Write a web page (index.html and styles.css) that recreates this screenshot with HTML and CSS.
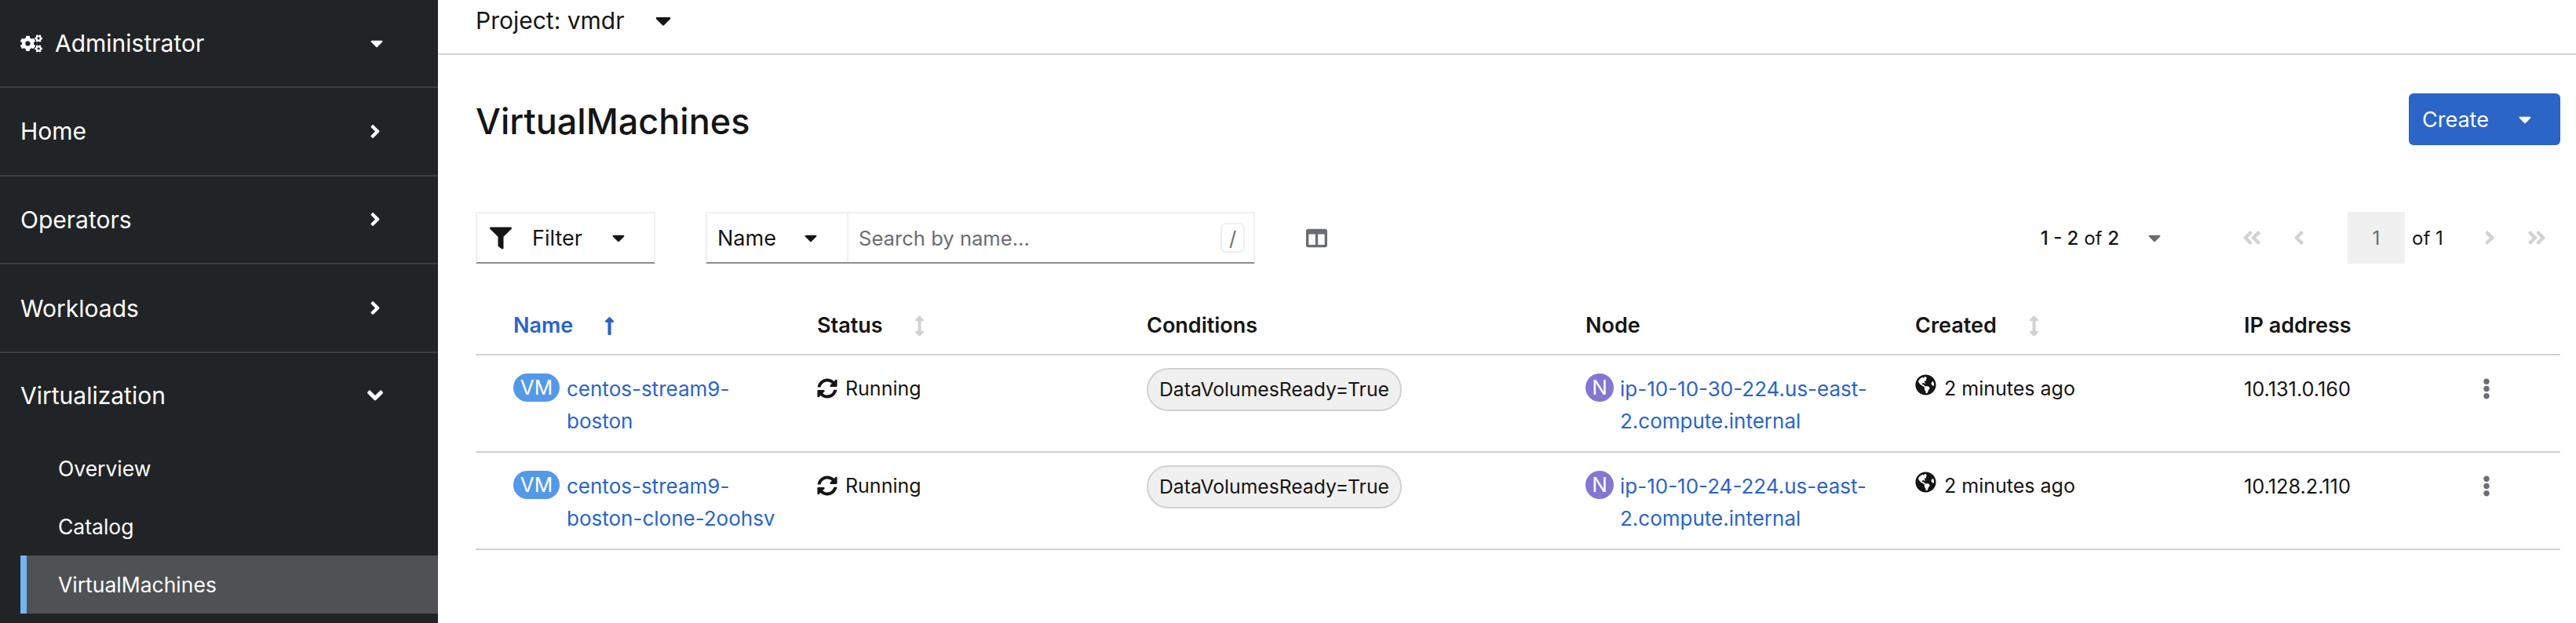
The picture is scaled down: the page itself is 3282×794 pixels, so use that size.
FILE: index.html
```html
<!DOCTYPE html>
<html lang="en">
<head>
  <meta charset="UTF-8">
  <title>VirtualMachines</title>
  <link rel="stylesheet" href="styles.css">
</head>
<body>

  <svg class="icon-defs" xmlns="http://www.w3.org/2000/svg">
    <symbol id="i-caret" viewBox="0 0 320 512"><path d="M31.3 192h257.3c17.8 0 26.7 21.5 14.1 34.1L174.1 354.8c-7.8 7.8-20.5 7.8-28.3 0L17.2 226.1C4.6 213.5 13.5 192 31.3 192z"/></symbol>
    <symbol id="i-right" viewBox="0 0 256 512"><path d="M224.3 273l-136 136c-9.4 9.4-24.6 9.4-33.9 0l-22.6-22.6c-9.4-9.4-9.4-24.6 0-33.9l96.4-96.4-96.4-96.4c-9.4-9.4-9.4-24.6 0-33.9L54.3 103c9.4-9.4 24.6-9.4 33.9 0l136 136c9.5 9.4 9.5 24.6.1 34z"/></symbol>
    <symbol id="i-left" viewBox="0 0 256 512"><path d="M31.7 239l136-136c9.4-9.4 24.6-9.4 33.9 0l22.6 22.6c9.4 9.4 9.4 24.6 0 33.9L127.9 256l96.4 96.4c9.4 9.4 9.4 24.6 0 33.9L201.7 409c-9.4 9.4-24.6 9.4-33.9 0l-136-136c-9.5-9.4-9.5-24.6-.1-34z"/></symbol>
    <symbol id="i-down" viewBox="0 0 320 512"><path d="M143 352.3L7 216.3c-9.4-9.4-9.4-24.6 0-33.9l22.6-22.6c9.4-9.4 24.6-9.4 33.9 0l96.4 96.4 96.4-96.4c9.4-9.4 24.6-9.4 33.9 0l22.6 22.6c9.4 9.4 9.4 24.6 0 33.9l-136 136c-9.2 9.4-24.4 9.4-33.8 0z"/></symbol>
    <symbol id="i-dleft" viewBox="0 0 448 512"><path d="M223.7 239l136-136c9.4-9.4 24.6-9.4 33.9 0l22.6 22.6c9.4 9.4 9.4 24.6 0 33.9L319.9 256l96.4 96.4c9.4 9.4 9.4 24.6 0 33.9L393.7 409c-9.4 9.4-24.6 9.4-33.9 0l-136-136c-9.5-9.4-9.5-24.6-.1-34zm-192 34l136 136c9.4 9.4 24.6 9.4 33.9 0l22.6-22.6c9.4-9.4 9.4-24.6 0-33.9L127.9 256l96.4-96.4c9.4-9.4 9.4-24.6 0-33.9L201.7 103c-9.4-9.4-24.6-9.4-33.9 0l-136 136c-9.5 9.4-9.5 24.6-.1 34z"/></symbol>
    <symbol id="i-dright" viewBox="0 0 448 512"><path d="M224.3 273l-136 136c-9.4 9.4-24.6 9.4-33.9 0l-22.6-22.6c-9.4-9.4-9.4-24.6 0-33.9l96.4-96.4-96.4-96.4c-9.4-9.4-9.4-24.6 0-33.9L54.3 103c9.4-9.4 24.6-9.4 33.9 0l136 136c9.5 9.4 9.5 24.6.1 34zm192-34l-136-136c-9.4-9.4-24.6-9.4-33.9 0l-22.6 22.6c-9.4 9.4-9.4 24.6 0 33.9l96.4 96.4-96.4 96.4c-9.4 9.4-9.4 24.6 0 33.9l22.6 22.6c9.4 9.4 24.6 9.4 33.9 0l136-136c9.4-9.2 9.4-24.4 0-33.8z"/></symbol>
    <symbol id="i-filter" viewBox="0 0 512 512"><path d="M487.976 0H24.028C2.71 0-8.047 25.866 7.058 40.971L192 225.941V432c0 7.831 3.821 15.17 10.237 19.662l80 55.98C298.02 518.69 320 507.493 320 487.98V225.941l184.947-184.97C520.021 25.896 509.338 0 487.976 0z"/></symbol>
    <symbol id="i-columns" viewBox="0 0 512 512"><path d="M464 32H48C21.49 32 0 53.49 0 80v352c0 26.51 21.49 48 48 48h416c26.51 0 48-21.49 48-48V80c0-26.51-21.49-48-48-48zM224 416H64V160h160v256zm224 0H288V160h160v256z"/></symbol>
    <symbol id="i-sync" viewBox="0 0 512 512"><path d="M370.72 133.28C339.458 104.008 298.888 87.962 255.848 88c-77.458.068-144.328 53.178-162.791 126.85-1.344 5.363-6.122 9.15-11.651 9.15H24.103c-7.498 0-13.194-6.807-11.807-14.176C33.933 94.924 134.813 8 256 8c66.448 0 126.791 26.136 171.315 68.685L463.03 40.97C478.149 25.851 504 36.559 504 57.941V192c0 13.255-10.745 24-24 24H345.941c-21.382 0-32.09-25.851-16.971-40.971l41.75-41.749zM32 296h134.059c21.382 0 32.09 25.851 16.971 40.971l-41.75 41.75c31.262 29.273 71.835 45.319 114.876 45.28 77.418-.07 144.315-53.144 162.787-126.849 1.344-5.363 6.122-9.15 11.651-9.15h57.304c7.498 0 13.194 6.807 11.807 14.176C478.067 417.076 377.187 504 256 504c-66.448 0-126.791-26.136-171.315-68.685L48.97 471.03C33.851 486.149 8 475.441 8 454.059V320c0-13.255 10.745-24 24-24z"/></symbol>
    <symbol id="i-globe" viewBox="0 0 496 512"><path d="M248 8C111.03 8 0 119.03 0 256s111.03 248 248 248 248-111.03 248-248S384.97 8 248 8zm82.29 357.6c-3.9 3.88-7.99 7.95-11.31 11.28-2.99 3-5.1 6.7-6.17 10.71-1.51 5.66-2.73 11.38-4.77 16.87l-17.39 46.85c-13.76 3-28 4.69-42.65 4.69v-27.38c1.69-12.62-7.64-36.26-22.63-51.25-6-6-9.37-14.14-9.37-22.63v-32.01c0-11.64-6.27-22.34-16.46-27.97-14.37-7.95-34.81-19.06-48.81-26.11-11.48-5.78-22.1-13.14-31.65-21.75l-.8-.72a114.792 114.792 0 0 1-18.06-20.74c-9.38-13.77-24.66-36.42-34.59-51.14 20.47-45.5 57.36-82.04 103.2-101.89l24.01 12.01C203.48 89.74 216 82.01 216 70.11v-11.3c7.99-1.29 16.12-2.11 24.39-2.42l28.3 28.3c6.25 6.25 6.25 16.38 0 22.63L264 112l-10.34 10.34c-3.12 3.12-3.12 8.19 0 11.31l4.69 4.69c3.12 3.12 3.12 8.19 0 11.31l-8 8a8.008 8.008 0 0 1-5.66 2.34h-8.99c-2.08 0-4.08.81-5.58 2.27l-9.92 9.65a8.008 8.008 0 0 0-1.58 9.31l15.59 31.19c2.66 5.32-1.21 11.58-7.15 11.58h-5.64c-1.93 0-3.79-.7-5.24-1.96l-9.28-8.06a16.017 16.017 0 0 0-15.55-3.1l-31.17 10.39a11.95 11.95 0 0 0-8.17 11.34c0 4.53 2.56 8.66 6.61 10.69l11.08 5.54c9.41 4.71 19.79 7.16 30.31 7.16s22.59 27.29 32 32h66.75c8.49 0 16.62 3.37 22.63 9.37l13.69 13.69a30.503 30.503 0 0 1 8.93 21.57 46.536 46.536 0 0 1-13.72 32.98zM417 274.25c-5.79-1.45-10.84-5-14.15-9.97l-17.98-26.97a23.97 23.97 0 0 1 0-26.62l19.59-29.38c2.32-3.47 5.5-6.29 9.24-8.15l12.98-6.49C440.2 193.59 448 223.87 448 256c0 8.67-.74 17.16-1.82 25.54L417 274.25z"/></symbol>
    <symbol id="i-cogs" viewBox="0 0 640 512"><path d="M512.1 191l-8.2 14.3c-3 5.3-9.4 7.5-15.1 5.4-11.8-4.4-22.6-10.7-32.1-18.6-4.6-3.8-5.8-10.5-2.8-15.7l8.2-14.3c-6.9-8-12.3-17.3-15.9-27.4h-16.5c-6 0-11.2-4.3-12.2-10.3-2-12-2.1-24.6 0-37.1 1-6 6.2-10.4 12.2-10.4h16.5c3.6-10.1 9-19.4 15.9-27.4l-8.2-14.3c-3-5.2-1.9-11.9 2.8-15.7 9.5-7.9 20.4-14.2 32.1-18.6 5.7-2.1 12.1.1 15.1 5.4l8.2 14.3c10.5-1.9 21.2-1.9 31.7 0L552 6.3c3-5.3 9.4-7.5 15.1-5.4 11.8 4.4 22.6 10.7 32.1 18.6 4.6 3.8 5.8 10.5 2.8 15.7l-8.2 14.3c6.9 8 12.3 17.3 15.9 27.4h16.5c6 0 11.2 4.3 12.2 10.3 2 12 2.1 24.6 0 37.1-1 6-6.2 10.4-12.2 10.4h-16.5c-3.6 10.1-9 19.4-15.9 27.4l8.2 14.3c3 5.2 1.9 11.9-2.8 15.7-9.5 7.9-20.4 14.2-32.1 18.6-5.7 2.1-12.1-.1-15.1-5.4l-8.2-14.3c-10.4 1.9-21.2 1.9-31.7 0zm-10.5-58.8c38.5 29.6 82.4-14.3 52.8-52.8-38.5-29.7-82.4 14.3-52.8 52.8zM386.3 286.1l33.7 16.8c10.1 5.8 14.5 18.1 10.5 29.1-8.9 24.2-26.4 46.4-42.6 65.8-7.4 8.9-20.2 11.1-30.3 5.3l-29.1-16.8c-16 13.7-34.6 24.6-54.9 31.7v33.6c0 11.6-8.3 21.6-19.7 23.6-24.6 4.2-50.4 4.4-75.9 0-11.5-2-20-11.9-20-23.6V418c-20.3-7.2-38.9-18-54.9-31.7L74 403c-10 5.8-22.9 3.6-30.3-5.3-16.2-19.4-33.3-41.6-42.2-65.7-4-10.9.4-23.2 10.5-29.1l33.3-16.8c-3.9-20.9-3.9-42.4 0-63.4L12 205.8c-10.1-5.8-14.6-18.1-10.5-29 8.9-24.2 26-46.4 42.2-65.8 7.4-8.9 20.2-11.1 30.3-5.3l29.1 16.8c16-13.7 34.6-24.6 54.9-31.7V57.1c0-11.5 8.2-21.5 19.6-23.5 24.6-4.2 50.5-4.4 76-.1 11.5 2 20 11.9 20 23.6v33.6c20.3 7.2 38.9 18 54.9 31.7l29.1-16.8c10-5.8 22.9-3.6 30.3 5.3 16.2 19.4 33.2 41.6 42.1 65.8 4 10.9.1 23.2-10 29.1l-33.7 16.8c3.9 21 3.9 42.5 0 63.5zm-117.6 21.1c59.2-77-28.7-164.9-105.7-105.7-59.2 77 28.7 164.9 105.7 105.7zm243.4 182.7l-8.2 14.3c-3 5.3-9.4 7.5-15.1 5.4-11.8-4.4-22.6-10.7-32.1-18.6-4.6-3.8-5.8-10.5-2.8-15.7l8.2-14.3c-6.9-8-12.3-17.3-15.9-27.4h-16.5c-6 0-11.2-4.3-12.2-10.3-2-12-2.1-24.6 0-37.1 1-6 6.2-10.4 12.2-10.4h16.5c3.6-10.1 9-19.4 15.9-27.4l-8.2-14.3c-3-5.2-1.9-11.9 2.8-15.7 9.5-7.9 20.4-14.2 32.1-18.6 5.7-2.1 12.1.1 15.1 5.4l8.2 14.3c10.5-1.9 21.2-1.9 31.7 0l8.2-14.3c3-5.3 9.4-7.5 15.1-5.4 11.8 4.4 22.6 10.7 32.1 18.6 4.6 3.8 5.8 10.5 2.8 15.7l-8.2 14.3c6.9 8 12.3 17.3 15.9 27.4h16.5c6 0 11.2 4.3 12.2 10.3 2 12 2.1 24.6 0 37.1-1 6-6.2 10.4-12.2 10.4h-16.5c-3.6 10.1-9 19.4-15.9 27.4l8.2 14.3c3 5.2 1.9 11.9-2.8 15.7-9.5 7.9-20.4 14.2-32.1 18.6-5.7 2.1-12.1-.1-15.1-5.4l-8.2-14.3c-10.4 1.9-21.2 1.9-31.7 0zM501.6 431c38.5 29.6 82.4-14.3 52.8-52.8-38.5-29.6-82.4 14.3-52.8 52.8z"/></symbol>
    <symbol id="i-kebab" viewBox="0 0 192 512"><path d="M96 184c39.8 0 72 32.2 72 72s-32.2 72-72 72-72-32.2-72-72 32.2-72 72-72zM24 80c0 39.8 32.2 72 72 72s72-32.2 72-72S135.8 8 96 8 24 40.2 24 80zm0 352c0 39.8 32.2 72 72 72s72-32.2 72-72-32.2-72-72-72-72 32.2-72 72z"/></symbol>
    <symbol id="i-up" viewBox="0 0 256 512"><path d="M88 166.059V468c0 6.627 5.373 12 12 12h56c6.627 0 12-5.373 12-12V166.059h46.059c21.382 0 32.09-25.851 16.971-40.971l-86.059-86.059c-9.373-9.373-24.569-9.373-33.941 0l-86.059 86.059c-15.119 15.119-4.411 40.971 16.971 40.971H88z"/></symbol>
    <symbol id="i-sort" viewBox="0 0 256 512"><path d="M214.059 377.941H168V134.059h46.059c21.382 0 32.09-25.851 16.971-40.971L144.971 7.029c-9.373-9.373-24.569-9.373-33.941 0L24.971 93.088c-15.119 15.119-4.411 40.971 16.971 40.971H88v243.882H41.941c-21.382 0-32.09 25.851-16.971 40.971l86.059 86.059c9.373 9.373 24.569 9.373 33.941 0l86.059-86.059c15.12-15.119 4.412-40.971-16.97-40.971z"/></symbol>
  </svg>

  <div class="layout">

    <nav class="sidebar">
      <div class="nav-section perspective">
        <svg class="ico-cogs"><use href="#i-cogs"/></svg>
        <span class="nav-label">Administrator</span>
        <svg class="ico-caret-nav"><use href="#i-caret"/></svg>
      </div>
      <div class="nav-section"><span class="nav-label">Home</span><svg class="ico-right"><use href="#i-right"/></svg></div>
      <div class="nav-section"><span class="nav-label">Operators</span><svg class="ico-right"><use href="#i-right"/></svg></div>
      <div class="nav-section"><span class="nav-label">Workloads</span><svg class="ico-right"><use href="#i-right"/></svg></div>
      <div class="nav-section open"><span class="nav-label">Virtualization</span><svg class="ico-down"><use href="#i-down"/></svg></div>
      <ul class="subnav">
        <li>Overview</li>
        <li>Catalog</li>
        <li class="active">VirtualMachines</li>
      </ul>
    </nav>

    <main class="content">
      <div class="project-bar">
        <span>Project: vmdr</span>
        <svg class="ico-caret-project"><use href="#i-caret"/></svg>
      </div>

      <div class="page-head">
        <h1>VirtualMachines</h1>
        <button class="create-btn">Create <svg class="ico-caret-create"><use href="#i-caret"/></svg></button>
      </div>

      <div class="toolbar">
        <div class="filter-btn">
          <svg class="ico-filter"><use href="#i-filter"/></svg>
          <span>Filter</span>
          <svg class="ico-caret-tool"><use href="#i-caret"/></svg>
        </div>
        <div class="search-group">
          <div class="search-type">
            <span>Name</span>
            <svg class="ico-caret-tool"><use href="#i-caret"/></svg>
          </div>
          <div class="search-input">
            <span class="placeholder">Search by name...</span>
            <kbd class="slash">/</kbd>
          </div>
        </div>
        <svg class="ico-columns"><use href="#i-columns"/></svg>

        <div class="pagination">
          <span class="page-count"><b>1 - 2</b> of <b>2</b></span>
          <svg class="ico-caret-page"><use href="#i-caret"/></svg>
          <svg class="ico-page"><use href="#i-dleft"/></svg>
          <svg class="ico-page prev"><use href="#i-left"/></svg>
          <span class="page-input">1</span>
          <span class="page-of">of 1</span>
          <svg class="ico-page next"><use href="#i-right"/></svg>
          <svg class="ico-page"><use href="#i-dright"/></svg>
        </div>
      </div>

      <table class="vm-table">
        <colgroup>
          <col class="col-name">
          <col class="col-status">
          <col class="col-cond">
          <col class="col-node">
          <col class="col-created">
          <col class="col-ip">
          <col>
        </colgroup>
        <thead>
          <tr>
            <th class="first sorted">Name <svg class="ico-up"><use href="#i-up"/></svg></th>
            <th>Status <svg class="ico-sort"><use href="#i-sort"/></svg></th>
            <th>Conditions</th>
            <th>Node</th>
            <th>Created <svg class="ico-sort"><use href="#i-sort"/></svg></th>
            <th>IP address</th>
            <th></th>
          </tr>
        </thead>
        <tbody>
          <tr>
            <td class="first"><div class="res"><span class="badge vm">VM</span><a href="#">centos-stream9-boston</a></div></td>
            <td><div class="res status"><svg class="ico-sync"><use href="#i-sync"/></svg>Running</div></td>
            <td><span class="chip">DataVolumesReady=True</span></td>
            <td><div class="res"><span class="badge node">N</span><a href="#">ip-10-10-30-224.us-east-2.compute.internal</a></div></td>
            <td><div class="res status"><svg class="ico-globe"><use href="#i-globe"/></svg>2 minutes ago</div></td>
            <td class="ip">10.131.0.160</td>
            <td><svg class="ico-kebab"><use href="#i-kebab"/></svg></td>
          </tr>
          <tr>
            <td class="first"><div class="res"><span class="badge vm">VM</span><a href="#">centos-stream9-boston-clone-2oohsv</a></div></td>
            <td><div class="res status"><svg class="ico-sync"><use href="#i-sync"/></svg>Running</div></td>
            <td><span class="chip">DataVolumesReady=True</span></td>
            <td><div class="res"><span class="badge node">N</span><a href="#">ip-10-10-24-224.us-east-2.compute.internal</a></div></td>
            <td><div class="res status"><svg class="ico-globe"><use href="#i-globe"/></svg>2 minutes ago</div></td>
            <td class="ip">10.128.2.110</td>
            <td><svg class="ico-kebab"><use href="#i-kebab"/></svg></td>
          </tr>
        </tbody>
      </table>
    </main>

  </div>

</body>
</html>
```

FILE: styles.css
```css
* {
  box-sizing: border-box;
}

html, body {
  height: 100%;
}

body {
  margin: 0;
  overflow: hidden;
  background: #fff;
  color: #151515;
  font-family: "Inter", "Noto Sans", sans-serif;
  font-size: 27px;
}

svg {
  fill: currentColor;
  flex: none;
}

.icon-defs {
  display: none;
}

.layout {
  display: flex;
  height: 794px;
}

/* Sidebar */
.sidebar {
  width: 558px;
  flex: none;
  background: #212427;
  color: #fff;
}

.nav-section {
  height: 112.67px;
  padding: 0 0 0 26px;
  border-bottom: 2px solid #3c3f42;
  display: flex;
  align-items: center;
  font-size: 30px;
  line-height: 1;
}

.nav-section.perspective {
  height: 112px;
}

.nav-section.open {
  border-bottom: none;
  height: 110px;
  padding-bottom: 2px;
}

.nav-label {
  flex: 1;
}

.ico-cogs {
  width: 28px;
  height: 23px;
  margin-right: 16px;
}

.ico-caret-nav {
  width: 16px;
  height: 26px;
  margin-right: 70px;
}

.ico-right {
  width: 14px;
  height: 27px;
  margin-right: 73px;
}

.ico-down {
  width: 20px;
  height: 32px;
  margin-right: 70px;
}

.subnav {
  list-style: none;
  margin: 0;
  padding: 0 0 0 26px;
}

.subnav li {
  height: 74px;
  padding-left: 48px;
  display: flex;
  align-items: center;
  font-size: 26.5px;
}

.subnav li.active {
  background: #4f5255;
  border-left: 8px solid #73b5f1;
  padding-left: 40px;
}

/* Main area */
.content {
  flex: 1;
  min-width: 0;
  padding: 0 20px 0 48px;
}

.project-bar {
  height: 70px;
  margin: 0 -20px 0 -48px;
  padding: 0 0 16px 48px;
  border-bottom: 2px solid #d2d2d2;
  display: flex;
  align-items: center;
  font-size: 30px;
}

.ico-caret-project {
  width: 20px;
  height: 32px;
  margin-left: 39px;
}

.page-head {
  height: 200px;
  padding-bottom: 36px;
  display: flex;
  align-items: center;
  justify-content: space-between;
}

h1 {
  margin: 4px 0 0;
  font-size: 45px;
  font-weight: 500;
}

.create-btn {
  width: 193px;
  height: 66px;
  padding: 0 0 0 17px;
  border: none;
  border-radius: 6px;
  background: #2b65c5;
  color: #fff;
  font: inherit;
  display: flex;
  align-items: center;
}

.ico-caret-create {
  width: 16px;
  height: 26px;
  margin-left: 38px;
}

/* Toolbar */
.toolbar {
  height: 66px;
  display: flex;
  align-items: center;
}

.filter-btn {
  width: 229px;
  height: 66px;
  padding-left: 16px;
  border: 2px solid #f0f0f0;
  border-bottom-color: #8a8d90;
  display: flex;
  align-items: center;
}

.ico-filter {
  width: 28px;
  height: 29px;
  margin-right: 26px;
}

.ico-caret-tool {
  width: 16px;
  height: 26px;
  margin-left: 38px;
}

.search-group {
  width: 700px;
  height: 66px;
  margin-left: 64px;
  border: 2px solid #f0f0f0;
  border-bottom-color: #8a8d90;
  display: flex;
}

.search-type {
  width: 180px;
  padding-left: 13px;
  border-right: 2px solid #f0f0f0;
  display: flex;
  align-items: center;
}

.search-type .ico-caret-tool {
  margin-left: 36px;
}

.search-input {
  flex: 1;
  padding: 0 11px 0 13px;
  display: flex;
  align-items: center;
  justify-content: space-between;
  font-size: 25.6px;
}

.placeholder {
  color: #6a6e73;
}

.slash {
  width: 31px;
  height: 38px;
  border: 2px solid #f0f0f0;
  border-radius: 6px;
  color: #6a6e73;
  font: inherit;
  display: flex;
  align-items: center;
  justify-content: center;
}

.ico-columns {
  width: 27px;
  height: 27px;
  margin-left: 65px;
  color: #6a6e73;
}

.pagination {
  margin-left: auto;
  height: 66px;
  padding-right: 18px;
  display: flex;
  align-items: center;
  font-size: 24px;
}

.page-count b {
  font-weight: 500;
}

.ico-caret-page {
  width: 16px;
  height: 26px;
  margin: 0 104px 0 37px;
  color: #6a6e73;
}

.ico-page {
  width: 24px;
  height: 28px;
  color: #d2d2d2;
}

.ico-page.prev, .ico-page.next {
  width: 14px;
}

.ico-page.prev {
  margin: 0 55px 0 41px;
}

.ico-page.next {
  margin: 0 41px 0 55px;
}

.page-input {
  width: 73px;
  height: 66px;
  background: #f0f0f0;
  color: #6a6e73;
  display: flex;
  align-items: center;
  justify-content: center;
}

.page-of {
  width: 46px;
  padding-left: 9px;
  white-space: nowrap;
}

/* Table */
.vm-table {
  width: 100%;
  margin-top: 48px;
  border-collapse: collapse;
  table-layout: fixed;
}

.col-name { width: 435px; }
.col-status { width: 420px; }
.col-cond { width: 559px; }
.col-node { width: 420px; }
.col-created { width: 419px; }
.col-ip { width: 300px; }

th {
  height: 68px;
  padding: 0 0 7px;
  text-align: left;
  font-weight: 600;
  border-bottom: 2px solid #d2d2d2;
}

th.sorted {
  color: #2b65c5;
}

th svg {
  vertical-align: -5px;
}

.ico-up {
  width: 13px;
  height: 27px;
  margin-left: 33px;
  color: #2b65c5;
}

.ico-sort {
  width: 13px;
  height: 27px;
  margin-left: 34px;
  color: #d2d2d2;
}

td {
  height: 124px;
  padding: 22px 0 0;
  vertical-align: top;
  font-size: 26px;
  line-height: 41px;
  border-bottom: 2px solid #d2d2d2;
}

.first {
  padding-left: 48px;
}

.res {
  display: flex;
  align-items: flex-start;
}

td.first .res {
  padding-right: 36px;
}

a {
  color: #2b65c5;
  text-decoration: none;
  min-width: 0;
}

.badge {
  height: 36px;
  margin: 1px 9px 0 0;
  border-radius: 18px;
  color: #fff;
  line-height: 36px;
  text-align: center;
  flex: none;
}

.badge.vm {
  width: 59px;
  background: #5499e8;
}

.badge.node {
  width: 36px;
  margin-right: 8px;
  background: #8476d1;
}

.status {
  font-size: 25px;
}

.status svg {
  margin-right: 10px;
}

.ico-sync {
  width: 26px;
  height: 26px;
  margin-top: 7px;
}

.ico-globe {
  width: 27px;
  height: 27px;
  margin-top: 2px;
}

.ip {
  font-size: 25.3px;
}

.chip {
  display: inline-block;
  height: 55px;
  margin-top: -7px;
  padding: 0 14px;
  border: 2px solid #d2d2d2;
  border-radius: 28px;
  background: #f0f0f0;
  font-size: 24.7px;
  line-height: 51px;
  white-space: nowrap;
}

.ico-kebab {
  width: 10px;
  height: 27px;
  margin: 7px 0 0 4px;
  color: #6a6e73;
}
```
